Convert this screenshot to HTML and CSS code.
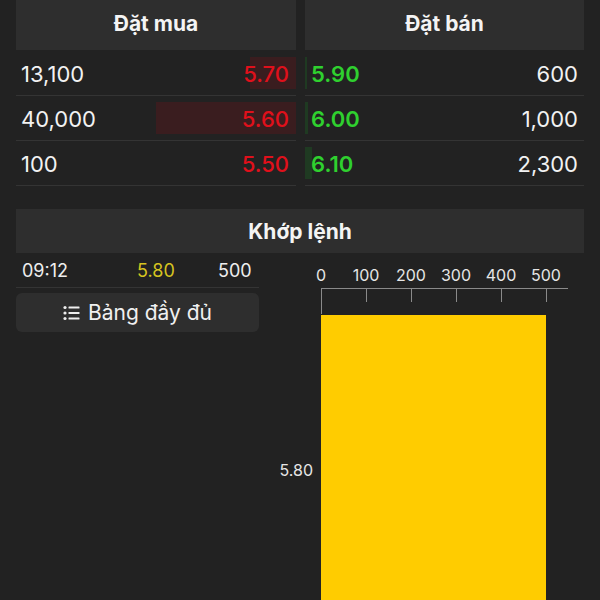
FILE: index.html
```html
<!DOCTYPE html>
<html lang="vi">
<head>
  <meta charset="UTF-8" />
  <meta name="viewport" content="width=device-width, initial-scale=1.0" />
  <title>Sổ lệnh</title>
  <link rel="stylesheet" href="styles.css">
</head>
<body>
  <section class="book">
    <div class="side bid">
      <div class="head">Đặt mua</div>
      <div class="row"><span class="bar" style="width: 46px"></span><span class="qty">13,100</span><span class="price down">5.70</span></div>
      <div class="row"><span class="bar" style="width: 140px"></span><span class="qty">40,000</span><span class="price down">5.60</span></div>
      <div class="row"><span class="bar" style="width: 0"></span><span class="qty">100</span><span class="price down">5.50</span></div>
    </div>
    <div class="side ask">
      <div class="head">Đặt bán</div>
      <div class="row"><span class="bar" style="width: 2px"></span><span class="price up">5.90</span><span class="qty">600</span></div>
      <div class="row"><span class="bar" style="width: 3px"></span><span class="price up">6.00</span><span class="qty">1,000</span></div>
      <div class="row"><span class="bar" style="width: 7px"></span><span class="price up">6.10</span><span class="qty">2,300</span></div>
    </div>
  </section>

  <section class="match">
    <div class="head">Khớp lệnh</div>
    <div class="match-body">
      <div class="trades">
        <div class="trade">
          <span class="t-time">09:12</span>
          <span class="t-price">5.80</span>
          <span class="t-vol">500</span>
        </div>
        <button class="full">
          <svg width="17" height="16" viewBox="0 0 17 16">
            <g fill="#eee">
              <circle cx="2" cy="2.5" r="1.6"/>
              <circle cx="2" cy="8" r="1.6"/>
              <circle cx="2" cy="13.5" r="1.6"/>
              <rect x="5.5" y="1.5" width="11" height="2" rx="0.5"/>
              <rect x="5.5" y="7" width="11" height="2" rx="0.5"/>
              <rect x="5.5" y="12.5" width="11" height="2" rx="0.5"/>
            </g>
          </svg>
          Bảng đầy đủ
        </button>
      </div>
      <svg class="chart" width="341" height="347" viewBox="0 0 341 347">
        <g fill="#e6e6e6" font-size="16" text-anchor="middle">
          <text x="62" y="28">0</text>
          <text x="107" y="28">100</text>
          <text x="152" y="28">200</text>
          <text x="197" y="28">300</text>
          <text x="242" y="28">400</text>
          <text x="287" y="28">500</text>
        </g>
        <g stroke="#8a8a8a" stroke-width="1">
          <line x1="62" y1="35.5" x2="309" y2="35.5"/>
          <line x1="62.5" y1="35" x2="62.5" y2="61"/>
          <line x1="107.5" y1="35" x2="107.5" y2="49"/>
          <line x1="152.5" y1="35" x2="152.5" y2="49"/>
          <line x1="197.5" y1="35" x2="197.5" y2="49"/>
          <line x1="242.5" y1="35" x2="242.5" y2="49"/>
          <line x1="287.5" y1="35" x2="287.5" y2="49"/>
        </g>
        <rect x="62" y="62" width="225" height="300" fill="#ffcc00"/>
        <text x="54" y="223" fill="#e6e6e6" font-size="16" text-anchor="end">5.80</text>
      </svg>
    </div>
  </section>
</body>
</html>
```

FILE: styles.css
```css
body {
  margin: 0;
  background: #222222;
  color: #f2f2f2;
  font-family: Inter, "Noto Sans", sans-serif;
  height: 600px;
  overflow: hidden;
}
* {
  box-sizing: border-box;
}
.book {
  display: grid;
  grid-template-columns: 280px 279px;
  gap: 9px;
  padding: 0 16px;
}
.head {
  background: #2e2e2e;
  height: 50px;
  display: flex;
  align-items: center;
  justify-content: center;
  font-size: 21px;
  font-weight: 700;
  color: #f4f4f4;
}
.bid .head,
.ask .head {
  padding-bottom: 4px;
  margin-bottom: 1px;
}
.row {
  position: relative;
  height: 45px;
  border-bottom: 1px solid #343434;
  display: flex;
  align-items: center;
  justify-content: space-between;
  padding: 1px 7px 0 5px;
  font-size: 22px;
}
.row span:not(.bar) {
  position: relative;
}
.bar {
  position: absolute;
  top: 6px;
  bottom: 6px;
}
.bid .bar {
  right: 0;
  background: #3a1d1f;
}
.ask .row {
  padding: 1px 6px 0 6px;
}
.ask .bar {
  left: 0;
  background: #1f3a22;
}
.down {
  color: #e0101b;
  font-weight: 500;
}
.up {
  color: #2fd02f;
  font-weight: 600;
}
.match {
  margin-top: 23px;
}
.match .head {
  margin: 0 16px;
  height: 44px;
}
.match-body {
  display: flex;
}
.trades {
  width: 243px;
  margin-left: 16px;
}
.trade {
  display: flex;
  align-items: center;
  height: 35px;
  border-bottom: 1px solid #343434;
  font-size: 18px;
  color: #eeeeee;
}
.t-time {
  width: 121px;
  padding-left: 6px;
}
.t-price {
  width: 81px;
  color: #d6c420;
}
.full {
  margin-top: 5px;
  width: 100%;
  height: 39px;
  background: #2e2e2e;
  border: none;
  border-radius: 6px;
  color: #f0f0f0;
  font-family: inherit;
  font-size: 21px;
  display: flex;
  align-items: center;
  justify-content: center;
  gap: 8px;
}
.chart {
  display: block;
  font-family: Inter, "Noto Sans", sans-serif;
}
```
